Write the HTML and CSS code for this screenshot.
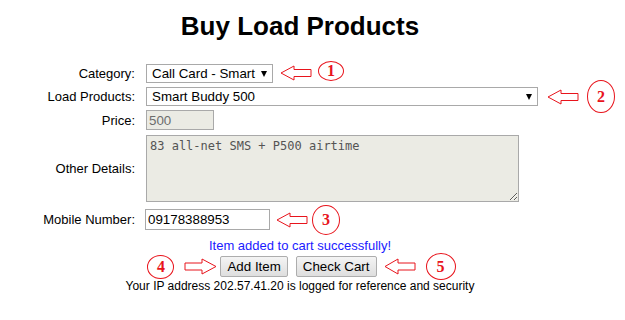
FILE: index.html
```html
<!DOCTYPE html>
<html>
<head>
  <meta charset="UTF-8">
  <link rel="stylesheet" href="styles.css">
  <title>Buy Load Products</title>
</head>
<body>
  <div class="page">
    <h1 class="title">Buy Load Products</h1>

    <div class="form">
      <label class="lbl">Category:</label>
      <div class="field row-cat">
        <span class="select-wrap w-cat">
          <select class="select">
            <option>Call Card - Smart</option>
          </select>
        </span>
        <svg class="arrow arrow-1" width="32" height="16" viewBox="0 0 32 16"><path d="M1 8 L14 1 L14 4.5 L31 4.5 L31 11.5 L14 11.5 L14 15 Z"/></svg>
        <span class="badge badge-1">1</span>
      </div>

      <label class="lbl">Load Products:</label>
      <div class="field row-load">
        <span class="select-wrap w-load">
          <select class="select">
            <option>Smart Buddy 500</option>
          </select>
        </span>
        <svg class="arrow arrow-2" width="32" height="16" viewBox="0 0 32 16"><path d="M1 8 L14 1 L14 4.5 L31 4.5 L31 11.5 L14 11.5 L14 15 Z"/></svg>
        <span class="badge badge-2">2</span>
      </div>

      <label class="lbl">Price:</label>
      <div class="field row-price">
        <input class="input input-price" type="text" value="500" readonly>
      </div>

      <label class="lbl">Other Details:</label>
      <div class="field row-details">
        <textarea class="details" readonly>83 all-net SMS + P500 airtime</textarea>
      </div>

      <label class="lbl lbl-mobile">Mobile Number:</label>
      <div class="field row-mobile">
        <input class="input input-mobile" type="text" value="09178388953">
        <svg class="arrow arrow-3" width="32" height="16" viewBox="0 0 32 16"><path d="M1 8 L14 1 L14 4.5 L31 4.5 L31 11.5 L14 11.5 L14 15 Z"/></svg>
        <span class="badge badge-3">3</span>
      </div>
    </div>

    <p class="msg">Item added to cart successfully!</p>

    <div class="actions">
      <span class="badge badge-4">4</span>
      <svg class="arrow arrow-4" width="33" height="17" viewBox="0 0 33 17"><path d="M32 8.5 L18 1 L18 5 L1 5 L1 12 L18 12 L18 16 Z"/></svg>
      <button class="btn btn-add">Add Item</button>
      <button class="btn btn-cart">Check Cart</button>
      <svg class="arrow arrow-5" width="32" height="17" viewBox="0 0 32 17"><path d="M1 8.5 L14 1 L14 5 L31 5 L31 12 L14 12 L14 16 Z"/></svg>
      <span class="badge badge-5">5</span>
    </div>

    <p class="note">Your IP address 202.57.41.20 is logged for reference and security</p>
  </div>
</body>
</html>
```

FILE: styles.css
```css
body {
  margin: 0;
  padding: 0;
  background-color: #fff;
  font-family: "Liberation Sans", Arial, sans-serif;
  color: #000;
}

.page {
  width: 600px;
}

.title {
  font-size: 26px;
  line-height: 30px;
  font-weight: bold;
  text-align: center;
  margin: 11px 0 23px;
}

/* form grid */
.form {
  display: grid;
  grid-template-columns: 135px auto;
  column-gap: 11px;
  row-gap: 4px;
  align-items: center;
}

.lbl {
  font-size: 13px;
  text-align: right;
}

.field {
  display: flex;
  align-items: center;
}

.row-cat,
.row-load {
  height: 19px;
}

.row-price {
  height: 20px;
}

.row-details {
  height: 67px;
  margin-top: 1px;
}

.row-mobile {
  height: 21px;
}

.lbl-mobile,
.row-mobile {
  margin-top: 3px;
}

/* selects */
.select-wrap {
  position: relative;
  display: inline-block;
  height: 19px;
}

.select-wrap::after {
  content: "";
  position: absolute;
  right: 6px;
  top: 7px;
  border-left: 3.5px solid transparent;
  border-right: 3.5px solid transparent;
  border-top: 6px solid #000;
  pointer-events: none;
}

.w-cat {
  width: 127px;
}

.w-load {
  width: 392px;
}

.select {
  -webkit-appearance: none;
  appearance: none;
  width: 100%;
  height: 19px;
  margin: 0;
  padding: 0 0 0 5px;
  border: 1px solid #a9a9a9;
  border-radius: 0;
  background-color: #fff;
  font-family: "Liberation Sans", Arial, sans-serif;
  font-size: 13.33px;
  color: #000;
}

/* inputs */
.input {
  box-sizing: border-box;
  margin: 0;
  padding: 0 2px;
  border: 1px solid #a9a9a9;
  font-family: "Liberation Sans", Arial, sans-serif;
  font-size: 13.33px;
  color: #000;
  outline: none;
}

.input-price {
  width: 68px;
  height: 20px;
  background-color: #ebebe4;
  color: #6d6d6d;
}

.input-mobile {
  width: 125px;
  height: 21px;
  margin-left: -1px;
}

.details {
  box-sizing: border-box;
  width: 373px;
  height: 67px;
  margin: 0;
  padding: 3px 3px 2px;
  border: 1px solid #a9a9a9;
  background-color: #ebebe4;
  font-family: "DejaVu Sans Mono", monospace;
  font-size: 12px;
  line-height: 14px;
  color: #545454;
  outline: none;
}

/* callouts */
.arrow {
  flex: none;
  overflow: visible;
}

.arrow path {
  fill: #fff;
  stroke: #e8141c;
  stroke-width: 1;
}

.badge {
  flex: none;
  box-sizing: border-box;
  display: inline-flex;
  align-items: center;
  justify-content: center;
  border: 1px solid #e8141c;
  border-radius: 50%;
  font-family: "Liberation Serif", "Times New Roman", serif;
  font-weight: bold;
  font-size: 16px;
  color: #e8141c;
}

.arrow-1 {
  margin: -2px 0 0 7px;
}

.badge-1 {
  width: 26px;
  height: 20px;
  margin: -6px 0 0 6px;
}

.arrow-2 {
  margin: 0 0 0 9px;
}

.badge-2 {
  width: 28px;
  height: 33px;
  margin: 0 0 0 8px;
}

.arrow-3 {
  margin: 0 0 0 6px;
}

.badge-3 {
  width: 28px;
  height: 30px;
  margin: 0 0 0 4px;
}

/* message, buttons, note */
.msg {
  margin: 9px 0 0;
  font-size: 13px;
  line-height: 14px;
  color: #1a1aff;
  text-align: center;
}

.actions {
  display: flex;
  justify-content: center;
  align-items: center;
  height: 21px;
  margin-top: 3px;
  padding-left: 3px;
}

.badge-4 {
  width: 27px;
  height: 24px;
}

.arrow-4 {
  margin: 0 3px 0 10px;
}

.btn {
  height: 21px;
  margin: 0;
  padding: 0 6px;
  border: 1px solid #adadad;
  border-radius: 2px;
  background: linear-gradient(#f4f4f4, #dedede);
  font-family: "Liberation Sans", Arial, sans-serif;
  font-size: 13.33px;
  color: #000;
  white-space: nowrap;
}

.btn-cart {
  margin-left: 8px;
}

.arrow-5 {
  margin: 0 0 0 7px;
}

.badge-5 {
  width: 30px;
  height: 27px;
  margin-left: 10px;
}

.note {
  margin: 3px 0 0;
  font-size: 12px;
  line-height: 13px;
  text-align: center;
}
```
